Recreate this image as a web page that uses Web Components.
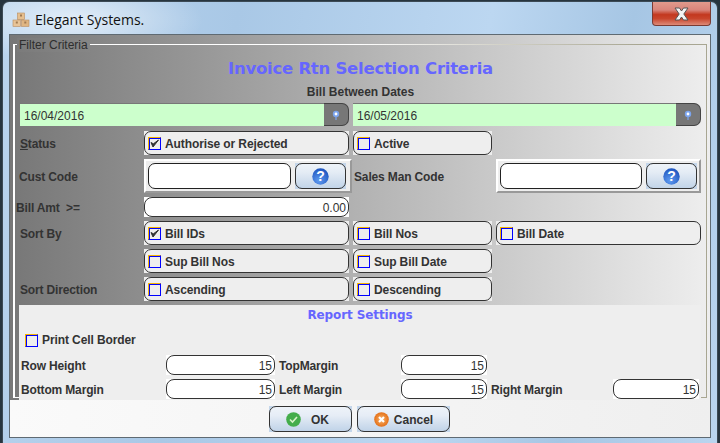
<!DOCTYPE html>
<html>
<head>
<meta charset="utf-8">
<style>
    html, body { margin: 0; height: 100%; overflow: hidden; }
    body { background: #27353f; font-family: "Liberation Sans", Arial, sans-serif; }
</style>
</head>
<body>

<app-window>
    <filter-panel>
        <h-note kind="title">Invoice Rtn Selection Criteria</h-note>
        <h-note kind="sub">Bill Between Dates</h-note>

        <date-field slot="dates" value="16/04/2016" style="width:329px"></date-field>
        <date-field slot="dates" value="16/05/2016" style="width:348px"></date-field>

        <form-label slot="rows" style="grid-column:1"><u>S</u>tatus</form-label>
        <check-box slot="rows" checked>Authorise or Rejected</check-box>
        <check-box slot="rows" style="grid-column:3">Active</check-box>

        <form-label slot="rows" style="grid-column:1;height:34px;margin-left:-1px">Cust Code</form-label>
        <lookup-field slot="rows" style="margin:0 -3px 0 0"></lookup-field>
        <form-label slot="rows" style="grid-column:3;height:34px;padding-left:1px">Sales Man Code</form-label>
        <lookup-field slot="rows" style="grid-column:4;padding-right:2px"></lookup-field>

        <form-label slot="rows" style="grid-column:1;height:20px;margin-left:-4px">Bill Amt &nbsp;&gt;=</form-label>
        <num-field slot="rows" value="0.00"></num-field>
        <span slot="rows" style="grid-column:3 / 5"></span>

        <form-label slot="rows" style="grid-column:1">Sort By</form-label>
        <check-box slot="rows" checked>Bill IDs</check-box>
        <check-box slot="rows">Bill Nos</check-box>
        <check-box slot="rows">Bill Date</check-box>

        <check-box slot="rows" style="grid-column:2">Sup Bill Nos</check-box>
        <check-box slot="rows">Sup Bill Date</check-box>
        <span slot="rows"></span>

        <form-label slot="rows" style="grid-column:1">Sort Direction</form-label>
        <check-box slot="rows">Ascending</check-box>
        <check-box slot="rows">Descending</check-box>

        <report-panel slot="report"></report-panel>
    </filter-panel>
</app-window>

<script>
customElements.define('app-window', class extends HTMLElement {
    constructor() {
        super()
        this.attachShadow({ mode: 'open' })
        this.shadowRoot.innerHTML = `
            <style>
                :host {
                    display: flex;
                    flex-direction: column;
                    box-sizing: border-box;
                    width: 716px;
                    height: 442px;
                    margin: 1px 0 0 2px;
                    border-radius: 7px 7px 0 0;
                    border: 1px solid #3c4a55;
                    border-bottom: none;
                    background:
                        radial-gradient(ellipse 130px 42px at 70px 18px, rgba(255,255,255,.62), rgba(255,255,255,0) 100%),
                        linear-gradient(100deg, #b9d4ee 0%, #a9c8e6 30%, #bcd7f1 62%, #a6c6e4 80%, #bad5ef 100%);
                }
                #bar {
                    display: flex;
                    align-items: flex-start;
                    height: 32px;
                    padding-left: 9px;
                    flex: none;
                }
                #logo { margin-top: 10px; }
                #name {
                    margin: 8px 0 0 5px;
                    font: 14px "Open Sans", "Liberation Sans", sans-serif;
                    color: #111;
                    flex: 1;
                }
                #close {
                    width: 59px;
                    height: 24px;
                    margin-right: 6px;
                    box-sizing: border-box;
                    border: 1px solid #7a3b33;
                    border-top: none;
                    border-radius: 0 0 4px 4px;
                    background: linear-gradient(#e09a8c 0%, #d8847a 35%, #c3381f 55%, #c8452c 72%, #dd8a78 100%);
                    display: flex;
                    align-items: center;
                    justify-content: center;
                }
                #client {
                    flex: 1;
                    margin: 0 6px 5px 6px;
                    border: 1px solid #5f6a72;
                    display: flex;
                    flex-direction: column;
                    background: linear-gradient(90deg, #f8f8f8, #efefef);
                }
                #foot {
                    flex: 1;
                    display: flex;
                    justify-content: flex-start;
                    gap: 5px;
                    padding: 6px 0 0 259px;
                    background: linear-gradient(90deg, #fafafa, #efefef);
                }
            </style>
            <div id="bar">
                <svg id="logo" width="18" height="16" viewBox="0 0 18 16">
                    <g stroke="#b98d5f" stroke-width=".6">
                        <rect x="5.5" y="1" width="7" height="6.5" fill="#e6bf8e"/>
                        <rect x="1" y="8" width="7.5" height="6.5" fill="#e8c497"/>
                        <rect x="9.5" y="8" width="7.5" height="6.5" fill="#e0b682"/>
                    </g>
                    <rect x="8" y="2.5" width="2" height="2" fill="#a07a52"/>
                    <rect x="3.8" y="9.5" width="2" height="2" fill="#a07a52"/>
                    <rect x="12.3" y="9.5" width="2" height="2" fill="#a07a52"/>
                </svg>
                <span id="name">Elegant Systems.</span>
                <div id="close">
                    <svg width="17" height="14" viewBox="0 0 17 14">
                        <path d="M2 1 L6.5 1 L8.5 4 L10.5 1 L15 1 L10.8 7 L15 13 L10.5 13 L8.5 10 L6.5 13 L2 13 L6.2 7 Z" fill="#f4f4f4" stroke="#555" stroke-width="1"/>
                    </svg>
                </div>
            </div>
            <div id="client">
                <slot></slot>
                <div id="foot">
                    <action-button kind="ok" style="width:83px">OK</action-button>
                    <action-button kind="cancel" style="width:93px">Cancel</action-button>
                </div>
            </div>
        `
    }
})

customElements.define('filter-panel', class extends HTMLElement {
    constructor() {
        super()
        this.attachShadow({ mode: 'open' })
        this.shadowRoot.innerHTML = `
            <style>
                :host {
                    display: block;
                    flex: none;
                    height: 365px;
                    box-sizing: border-box;
                    padding: 9px 3px 0 3px;
                    background: linear-gradient(90deg, #777 0%, #eee 100%);
                }
                #group {
                    position: relative;
                    box-sizing: border-box;
                    height: 354px;
                    border: 1px solid #b0ae9c;
                    border-left-width: 2px;
                    padding: 14px 5px 0 5px;
                    border-image: linear-gradient(90deg, #fff 0%, #fff 50%, #a8a692 90%) 1;
                }
                #legend {
                    position: absolute;
                    left: 2px;
                    top: -7px;
                    padding: 0 2px;
                    font: 12px "Liberation Sans", Arial, sans-serif;
                    color: #2e2e2e;
                    background: linear-gradient(90deg, #7b7b7b, #868686);
                }
                #heads { display: flex; flex-direction: column; align-items: center; }
                #dates {
                    display: flex;
                    gap: 4px;
                    margin: 0 0 5px 0;
                }
                #rows {
                    display: grid;
                    grid-template-columns: 120px 205px 139px 205px;
                    column-gap: 4px;
                    row-gap: 4px;
                    width: 681px;
                }
                #report { margin: 4px 0 0 -1px; }
            </style>
            <div id="group">
                <span id="legend">Filter Criteria</span>
                <div id="heads"><slot></slot></div>
                <div id="dates"><slot name="dates"></slot></div>
                <div id="rows"><slot name="rows"></slot></div>
                <div id="report"><slot name="report"></slot></div>
            </div>
        `
    }
})

customElements.define('h-note', class extends HTMLElement {
    constructor() {
        super()
        this.attachShadow({ mode: 'open' })
        this.shadowRoot.innerHTML = `
            <style>
                :host { display: block; font-weight: bold; }
                :host([kind=title]) {
                    font: bold 16.5px "DejaVu Sans", Verdana, sans-serif;
                    color: #6666ff;
                    height: 24px;
                    line-height: 20px;
                    letter-spacing: -.25px;
                }
                :host([kind=sub]) {
                    font: bold 12px "Liberation Sans", Arial, sans-serif;
                    color: #333;
                    height: 20px;
                    line-height: 18px;
                }
            </style>
            <slot></slot>
        `
    }
})

customElements.define('form-label', class extends HTMLElement {
    constructor() {
        super()
        this.attachShadow({ mode: 'open' })
        this.shadowRoot.innerHTML = `
            <style>
                :host {
                    display: flex;
                    align-items: center;
                    box-sizing: border-box;
                    height: 24px;
                    padding-top: 2px;
                    font: bold 12px "Liberation Sans", Arial, sans-serif;
                    letter-spacing: -.15px;
                    color: #333;
                    white-space: nowrap;
                }
            </style>
            <span><slot></slot></span>
        `
    }
})

customElements.define('date-field', class extends HTMLElement {
    constructor() {
        super()
        this.attachShadow({ mode: 'open' })
        this.shadowRoot.innerHTML = `
            <style>
                :host { display: flex; height: 23px; }
                #val {
                    flex: 1;
                    background: #ccffcc;
                    border-top: 1px solid #777;
                    padding: 0 0 0 4px;
                    font: 12px/24px "Liberation Sans", Arial, sans-serif;
                    color: #333;
                }
                #btn {
                    width: 25px;
                    background: #777;
                    border-radius: 0 7px 7px 0;
                    border: 1px solid #444;
                    border-left: none;
                    box-sizing: border-box;
                    display: flex;
                    align-items: center;
                    justify-content: center;
                }
            </style>
            <div id="val">${this.getAttribute('value')}</div>
            <div id="btn">
                <svg width="8" height="12" viewBox="0 0 8 12">
                    <circle cx="4" cy="5" r="3.2" fill="#7ba4ee"/>
                    <circle cx="4" cy="5" r="1.4" fill="#fff"/>
                    <rect x="3.4" y="8" width="1.2" height="3" fill="#7ba4ee"/>
                </svg>
            </div>
        `
    }
})

customElements.define('check-box', class extends HTMLElement {
    constructor() {
        super()
        this.attachShadow({ mode: 'open' })
        let mark = this.hasAttribute('checked')
            ? `<svg width="9" height="9" viewBox="0 0 9 9"><path d="M1 3.5 L3 8 L8.5 1 L3.4 4.8 Z" fill="#333" stroke="#333" stroke-width="1"/></svg>`
            : ''
        this.shadowRoot.innerHTML = `
            <style>
                :host {
                    display: block;
                    height: 24px;
                    background: #eeeeee;
                }
                #box {
                    box-sizing: border-box;
                    height: 24px;
                    border: 1px solid #333;
                    border-radius: 7px;
                    background: #eeeeee;
                    display: flex;
                    align-items: center;
                    padding-left: 3px;
                    gap: 4px;
                    font: bold 12px "Liberation Sans", Arial, sans-serif;
                    letter-spacing: -.1px;
                    color: #333;
                    white-space: nowrap;
                }
                #box > span:last-child { padding-top: 2px; }
                #tick {
                    box-sizing: border-box;
                    width: 13px;
                    height: 13px;
                    border: 1px solid;
                    border-color: #f5b400 #0000ff #0000ff #f5b400;
                    box-shadow: inset 1px 1px 0 #0000ff;
                    display: flex;
                    align-items: center;
                    justify-content: center;
                    background: #eee;
                }
            </style>
            <div id="box"><span id="tick">${mark}</span><span><slot></slot></span></div>
        `
    }
})

customElements.define('num-field', class extends HTMLElement {
    constructor() {
        super()
        this.attachShadow({ mode: 'open' })
        this.shadowRoot.innerHTML = `
            <style>
                :host { display: block; height: 20px; background: #fff; }
                div {
                    box-sizing: border-box;
                    height: 20px;
                    border: 1px solid #333;
                    border-radius: 8px;
                    background: #fff;
                    padding: 0 2px;
                    text-align: right;
                    font: 12px/20px "Liberation Sans", Arial, sans-serif;
                    color: #333;
                }
            </style>
            <div>${this.getAttribute('value')}</div>
        `
    }
})

customElements.define('help-button', class extends HTMLElement {
    constructor() {
        super()
        this.attachShadow({ mode: 'open' })
        this.shadowRoot.innerHTML = `
            <style>
                :host { display: block; width: 51px; height: 26px; background: #c4d6ea; }
                div {
                    box-sizing: border-box;
                    height: 26px;
                    border: 1px solid #333;
                    border-radius: 7px;
                    background: linear-gradient(#eef3f9, #e4ecf5 35%, #c2d4e8);
                    display: flex;
                    align-items: center;
                    justify-content: center;
                }
            </style>
            <div>
                <svg width="17" height="17" viewBox="0 0 17 17">
                    <defs><radialGradient id="h" cx=".4" cy=".75" r=".8"><stop offset="0" stop-color="#5f9bf0"/><stop offset="1" stop-color="#1a50bb"/></radialGradient></defs>
                    <circle cx="8.5" cy="8.5" r="8.2" fill="url(#h)"/>
                    <text x="8.5" y="13.4" text-anchor="middle" font-family="Liberation Sans" font-weight="bold" font-size="14" fill="#fff">?</text>
                </svg>
            </div>
        `
    }
})

customElements.define('lookup-field', class extends HTMLElement {
    constructor() {
        super()
        this.attachShadow({ mode: 'open' })
        this.shadowRoot.innerHTML = `
            <style>
                :host {
                    display: flex;
                    box-sizing: border-box;
                    height: 34px;
                    gap: 4px;
                    padding: 2px 4px 2px 2px;
                    align-items: center;
                    background: #eee;
                    border: 2px solid;
                    border-color: #fff #999 #999 #fff;
                }
                #input {
                    flex: 1;
                    box-sizing: border-box;
                    height: 26px;
                    border: 1px solid #222;
                    border-radius: 7px;
                    background: #fff;
                }
            </style>
            <div id="input"></div>
            <help-button></help-button>
        `
    }
})

customElements.define('report-panel', class extends HTMLElement {
    constructor() {
        super()
        this.attachShadow({ mode: 'open' })
        this.shadowRoot.innerHTML = `
            <style>
                :host {
                    display: block;
                    box-sizing: border-box;
                    width: 682px;
                    height: 95px;
                    background: #eeeeee;
                    padding: 0 2px;
                }
                #head {
                    text-align: center;
                    font: bold 12px/21px "DejaVu Sans", Verdana, sans-serif;
                    letter-spacing: -.1px;
                    color: #6666ff;
                    height: 21px;
                }
                #grid {
                    display: grid;
                    grid-template-columns: 145px 109px 126px 86px 126px 86px;
                    row-gap: 4px;
                }
                .lbl {
                    font: bold 12px/22px "Liberation Sans", Arial, sans-serif;
                    letter-spacing: -.15px;
                    height: 20px;
                    color: #333;
                    white-space: nowrap;
                }
                .lbl.in { padding-left: 4px; }
                .gap { grid-column: span 2; }
            </style>
            <div id="head">Report Settings</div>
            <plain-check>Print Cell Border</plain-check>
            <div id="grid">
                <span class="lbl">Row Height</span><num-field value="15"></num-field>
                <span class="lbl in">TopMargin</span><num-field value="15"></num-field>
                <span class="gap"></span>
                <span class="lbl">Bottom Margin</span><num-field value="15"></num-field>
                <span class="lbl in">Left Margin</span><num-field value="15"></num-field>
                <span class="lbl in">Right Margin</span><num-field value="15"></num-field>
            </div>
        `
    }
})

customElements.define('plain-check', class extends HTMLElement {
    constructor() {
        super()
        this.attachShadow({ mode: 'open' })
        this.shadowRoot.innerHTML = `
            <style>
                :host {
                    display: flex;
                    align-items: center;
                    gap: 4px;
                    height: 14px;
                    margin: 7px 0 8px 4px;
                    font: bold 12px "Liberation Sans", Arial, sans-serif;
                    letter-spacing: -.1px;
                    color: #333;
                }
                i {
                    box-sizing: border-box;
                    width: 13px;
                    height: 13px;
                    border: 1px solid;
                    border-color: #f5b400 #0000ff #0000ff #f5b400;
                    box-shadow: inset 1px 1px 0 #0000ff;
                }
            </style>
            <i></i><span><slot></slot></span>
        `
    }
})

customElements.define('action-button', class extends HTMLElement {
    constructor() {
        super()
        this.attachShadow({ mode: 'open' })
        let ok = this.getAttribute('kind') == 'ok'
        let icon = ok
            ? `<svg width="15" height="15" viewBox="0 0 15 15"><circle cx="7.5" cy="7.5" r="7.3" fill="#43ad4b"/><path d="M4 7.5 L6.5 10 L11 5" fill="none" stroke="#d8f2c8" stroke-width="1.6"/></svg>`
            : `<svg width="15" height="15" viewBox="0 0 15 15"><defs><radialGradient id="c" cx=".5" cy=".5" r=".55"><stop offset="0" stop-color="#f9b66e"/><stop offset="1" stop-color="#e2690f"/></radialGradient></defs><circle cx="7.5" cy="7.5" r="7.3" fill="url(#c)"/><path d="M5 5 L10 10 M10 5 L5 10" stroke="#fff" stroke-width="2.2"/></svg>`
        this.shadowRoot.innerHTML = `
            <style>
                :host { display: block; height: 26px; background: #c4d6ea; }
                div {
                    box-sizing: border-box;
                    height: 26px;
                    border: 1px solid #333;
                    border-radius: 7px;
                    background: linear-gradient(#eef3f9, #e6edf6 35%, #c0d3e8);
                    display: flex;
                    align-items: center;
                    justify-content: center;
                    gap: ${ok ? 10 : 5}px;
                    padding-right: ${ok ? 6 : 0}px;
                    font: bold 12px "Liberation Sans", Arial, sans-serif;
                    color: #333;
                }
                span { padding-top: 2px; }
            </style>
            <div>${icon}<span><slot></slot></span></div>
        `
    }
})
</script>
</body>
</html>
